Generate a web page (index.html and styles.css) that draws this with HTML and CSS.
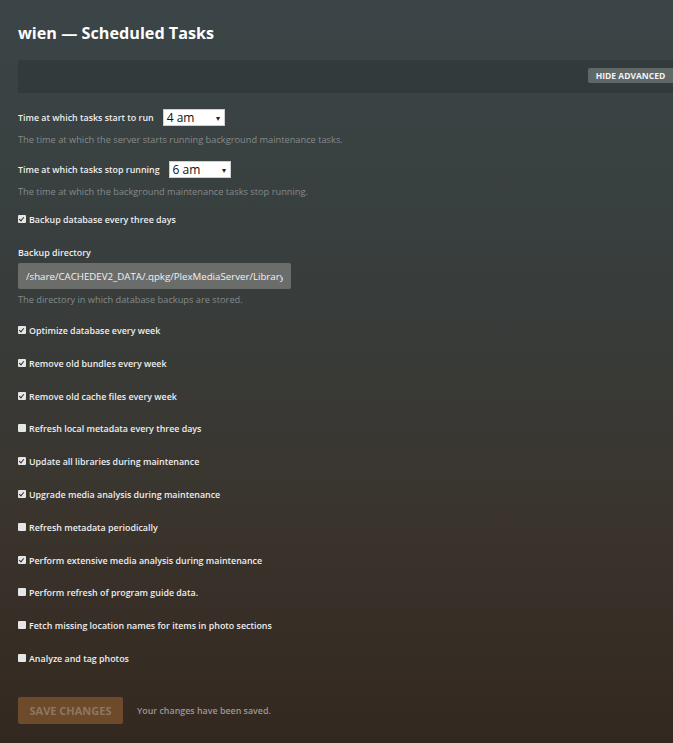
FILE: index.html
```html
<!DOCTYPE html>
<html lang="en">
<head>
  <meta charset="UTF-8" />
  <title>wien — Scheduled Tasks</title>
  <link rel="stylesheet" href="styles.css">
</head>
<body>
  <div class="page">
    <h1>wien — Scheduled Tasks</h1>

    <div class="toolbar">
      <button class="btn-advanced">Hide Advanced</button>
    </div>

    <div class="settings">
      <div class="setting">
        <div class="row">
          <label>Time at which tasks start to run</label>
          <div class="select">4 am <span class="arrow">&#9662;</span></div>
        </div>
        <p class="help">The time at which the server starts running background maintenance tasks.</p>
      </div>

      <div class="setting">
        <div class="row">
          <label>Time at which tasks stop running</label>
          <div class="select">6 am <span class="arrow">&#9662;</span></div>
        </div>
        <p class="help">The time at which the background maintenance tasks stop running.</p>
      </div>

      <div class="check checked first">Backup database every three days</div>

      <div class="setting dir">
        <label class="block">Backup directory</label>
        <input class="text-input" type="text" value="/share/CACHEDEV2_DATA/.qpkg/PlexMediaServer/Library/Plex Media Server/Backups">
        <p class="help">The directory in which database backups are stored.</p>
      </div>

      <div class="checks">
        <div class="check checked">Optimize database every week</div>
        <div class="check checked">Remove old bundles every week</div>
        <div class="check checked">Remove old cache files every week</div>
        <div class="check">Refresh local metadata every three days</div>
        <div class="check checked">Update all libraries during maintenance</div>
        <div class="check checked">Upgrade media analysis during maintenance</div>
        <div class="check">Refresh metadata periodically</div>
        <div class="check checked">Perform extensive media analysis during maintenance</div>
        <div class="check">Perform refresh of program guide data.</div>
        <div class="check">Fetch missing location names for items in photo sections</div>
        <div class="check">Analyze and tag photos</div>
      </div>

      <div class="actions">
        <button class="btn-save" disabled>Save Changes</button>
        <span class="saved">Your changes have been saved.</span>
      </div>
    </div>
  </div>
</body>
</html>
```

FILE: styles.css
```css
* {
  box-sizing: border-box;
}

html, body {
  margin: 0;
  padding: 0;
  height: 100%;
}

body {
  background: linear-gradient(to bottom, #3b4547 0%, #383e3d 35%, #3a342d 70%, #33281f 100%);
  font-family: "Open Sans", sans-serif;
  color: #eeeeee;
  overflow: hidden;
}

.page {
  padding: 22px 0 0 18px;
}

h1 {
  margin: 0;
  font-size: 16.2px;
  line-height: 22px;
  font-weight: 700;
  color: #ffffff;
}

.toolbar {
  margin-top: 16px;
  height: 33px;
  background: rgba(0, 0, 0, 0.13);
  display: flex;
  justify-content: flex-end;
  align-items: center;
}

.btn-advanced {
  height: 15px;
  width: 85px;
  border: none;
  border-radius: 2px 0 0 2px;
  background: #5f6767;
  color: #f2f2f2;
  font-family: "Open Sans", sans-serif;
  font-size: 8.5px;
  font-weight: 700;
  text-transform: uppercase;
  padding: 0;
  margin-top: -2px;
}

.settings {
  padding-top: 16px;
}

.setting {
  margin-bottom: 15px;
}

.row {
  display: flex;
  align-items: center;
  height: 17px;
}

label {
  font-size: 8.9px;
  font-weight: 600;
  color: #eeeeee;
}

.row label {
  margin-right: 9px;
}

.select {
  width: 62px;
  height: 17px;
  background: #ffffff;
  border: 1px solid #cfcfcf;
  color: #111111;
  font-size: 12px;
  line-height: 15px;
  padding: 0 4px 0 3px;
  display: flex;
  justify-content: space-between;
}

.arrow {
  font-size: 8px;
  color: #222222;
}

.help {
  margin: 8px 0 0;
  font-size: 9.25px;
  line-height: 12px;
  color: #858a8a;
}

.check {
  position: relative;
  padding-left: 11px;
  font-size: 8.9px;
  font-weight: 600;
  line-height: 14px;
  height: 14px;
  color: #eeeeee;
}

.check::before {
  content: "";
  position: absolute;
  left: 0;
  top: 2px;
  width: 8px;
  height: 8px;
  background: #e6e6e6;
  border-radius: 1px;
}

.check.checked::after {
  content: "";
  position: absolute;
  left: 2px;
  top: 3px;
  width: 2px;
  height: 4px;
  border: solid #333333;
  border-width: 0 1.5px 1.5px 0;
  transform: rotate(40deg);
}

.check.first {
  margin-top: 1px;
}

.setting.dir {
  margin-top: 19px;
  margin-bottom: 18px;
}

.block {
  display: block;
  line-height: 14px;
  margin-bottom: 3px;
}

.text-input {
  display: block;
  width: 273px;
  height: 26px;
  border: none;
  border-radius: 2px;
  background: #6b6d6b;
  color: #f2f2f2;
  font-family: "Open Sans", sans-serif;
  font-size: 9.7px;
  padding: 0 8px;
}

.setting.dir .help {
  margin-top: 5px;
}

.checks .check {
  margin-bottom: 18.8px;
}

.actions {
  margin-top: 31px;
  display: flex;
  align-items: center;
}

.btn-save {
  width: 105px;
  height: 27px;
  border: none;
  border-radius: 2px;
  background: #6c4a2a;
  color: #8e7762;
  font-family: "Open Sans", sans-serif;
  font-size: 11px;
  font-weight: 700;
  text-transform: uppercase;
  padding: 0;
}

.saved {
  margin-left: 14px;
  font-size: 8.9px;
  font-weight: 600;
  color: #9b9894;
}
```
